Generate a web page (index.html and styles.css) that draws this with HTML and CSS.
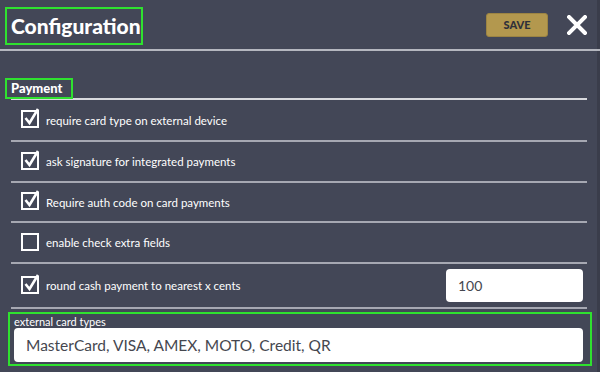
FILE: index.html
```html
<!DOCTYPE html>
<html lang="en">
<head>
    <meta charset="UTF-8">
    <title>Configuration</title>
    <link rel="stylesheet" href="styles.css">
</head>
<body>
    <div class="header">
        <div class="title">Configuration</div>
        <div class="actions">
            <button class="save">SAVE</button>
            <svg class="close" width="20" height="20" viewBox="0 0 20 20">
                <path d="M2 2 L18 18 M18 2 L2 18" stroke="#fff" stroke-width="4" stroke-linecap="square"/>
            </svg>
        </div>
    </div>

    <div class="section">
        <div class="section-head">
            <span class="section-title">Payment</span>
        </div>

        <div class="row">
            <svg class="check" width="20" height="22" viewBox="0 0 20 22"><rect x="1" y="4" width="16" height="16" fill="none" stroke="#fff" stroke-width="2"/><path d="M4.5 11 L8.5 16 L17 2" fill="none" stroke="#fff" stroke-width="2.6"/></svg>
            <span class="label">require card type on external device</span>
        </div>
        <div class="row">
            <svg class="check" width="20" height="22" viewBox="0 0 20 22"><rect x="1" y="4" width="16" height="16" fill="none" stroke="#fff" stroke-width="2"/><path d="M4.5 11 L8.5 16 L17 2" fill="none" stroke="#fff" stroke-width="2.6"/></svg>
            <span class="label">ask signature for integrated payments</span>
        </div>
        <div class="row">
            <svg class="check" width="20" height="22" viewBox="0 0 20 22"><rect x="1" y="4" width="16" height="16" fill="none" stroke="#fff" stroke-width="2"/><path d="M4.5 11 L8.5 16 L17 2" fill="none" stroke="#fff" stroke-width="2.6"/></svg>
            <span class="label">Require auth code on card payments</span>
        </div>
        <div class="row">
            <svg class="check" width="20" height="22" viewBox="0 0 20 22"><rect x="1" y="4" width="16" height="16" fill="none" stroke="#fff" stroke-width="2"/></svg>
            <span class="label">enable check extra fields</span>
        </div>
        <div class="row row-input">
            <svg class="check" width="20" height="22" viewBox="0 0 20 22"><rect x="1" y="4" width="16" height="16" fill="none" stroke="#fff" stroke-width="2"/><path d="M4.5 11 L8.5 16 L17 2" fill="none" stroke="#fff" stroke-width="2.6"/></svg>
            <span class="label">round cash payment to nearest x cents</span>
            <div class="field small">100</div>
        </div>
    </div>

    <div class="card-types">
        <div class="small-label">external card types</div>
        <div class="field wide">MasterCard, VISA, AMEX, MOTO, Credit, QR</div>
    </div>
</body>
</html>
```

FILE: styles.css
```css
body {
    margin: 0;
    background: linear-gradient(to left, #3a3d4b 3px, #434757 3px);
    font-family: Lato, "Noto Sans", sans-serif;
    color: #fff;
    width: 600px;
    height: 372px;
    overflow: hidden;
}

/* header */
.header {
    display: flex;
    justify-content: space-between;
    align-items: center;
    height: 49px;
    border-bottom: 2px solid #b5b7bf;
    padding: 0 13px 0 5px;
}

.title {
    border: 2px solid #2fe12f;
    height: 34px;
    width: 130px;
    padding-left: 4px;
    font-size: 21px;
    font-weight: 900;
    line-height: 34px;
    margin-top: 3px;
}

.actions {
    display: flex;
    align-items: center;
    gap: 19px;
}

.save {
    width: 62px;
    height: 24px;
    background-color: #b3984e;
    border: 1px solid #9c8443;
    border-radius: 3px;
    color: #2e303a;
    font-family: Lato, sans-serif;
    font-weight: 900;
    font-size: 11px;
    padding: 0;
}

.close {
    display: block;
    margin-top: 1px;
}

/* payment section */
.section {
    margin: 0 13px 0 11px;
}

.section-head {
    margin-top: 26px;
    border-bottom: 2px solid #d8d9dd;
}

.section-title {
    display: inline-block;
    margin-left: -6px;
    border: 2px solid #2fe12f;
    width: 60px;
    height: 17px;
    padding-left: 4px;
    font-size: 13px;
    font-weight: 900;
    line-height: 17px;
    margin-bottom: -1px;
}

.row {
    display: flex;
    align-items: center;
    height: 39px;
    padding-left: 10px;
    border-bottom: 2px solid #a6a8b2;
}

.row:nth-child(2) {
    height: 40px;
}

.row:nth-child(4) {
    height: 38px;
}

.row-input {
    height: 43px;
}

.check {
    display: block;
    margin-top: -4px;
}

.label {
    margin-left: 5px;
    font-size: 11.5px;
    flex: 1;
}

.field {
    background-color: #fff;
    border-radius: 4px;
    color: #45474f;
    box-sizing: border-box;
}

.small {
    width: 137px;
    height: 33px;
    padding-left: 12px;
    font-size: 14px;
    line-height: 33px;
    margin-right: 4px;
}

/* external card types */
.card-types {
    margin: 3px 8px 0 8px;
    border: 2px solid #2fe12f;
    height: 50px;
    padding: 0 7px 0 4px;
}

.small-label {
    font-size: 11px;
    line-height: 13px;
    margin-top: 1px;
}

.wide {
    height: 34px;
    padding-left: 12px;
    font-size: 15.5px;
    line-height: 34px;
}
```
